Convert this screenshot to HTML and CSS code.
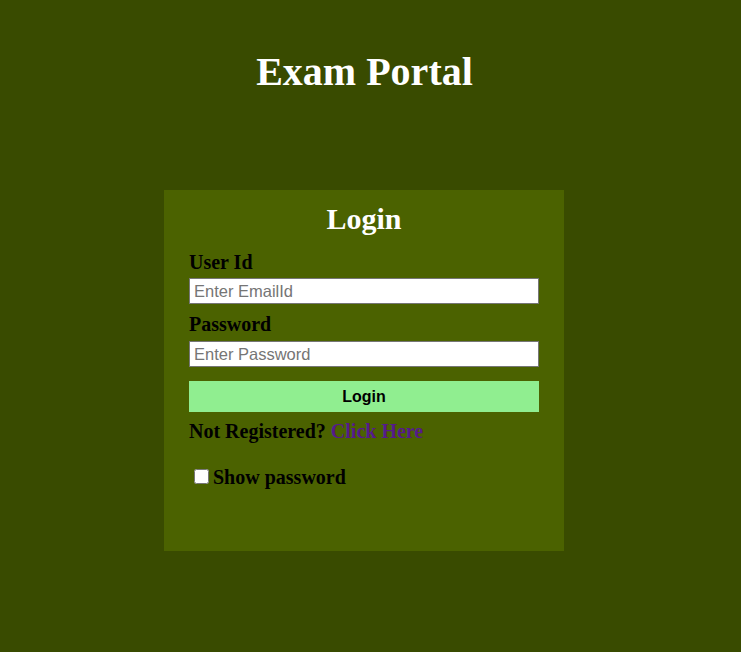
FILE: index.html
```html
<!DOCTYPE html>
<html>
<head>
<meta charset="utf-8">
<title>Exam Portal</title>
<link rel="stylesheet" href="styles.css">
</head>
<body>
<main class="page">
  <h1 class="title">Exam Portal</h1>
  <form class="card">
    <h2 class="card-title">Login</h2>
    <label class="label" for="uid">User Id</label>
    <input class="field" id="uid" type="text" placeholder="Enter EmailId">
    <label class="label" for="pwd">Password</label>
    <input class="field" id="pwd" type="password" placeholder="Enter Password">
    <button class="btn" type="button">Login</button>
    <p class="register">Not Registered? <a class="link" href="#">Click Here</a></p>
    <label class="show"><input class="check" type="checkbox">Show password</label>
  </form>
</main>
</body>
</html>
```
FILE: styles.css
```css
html, body {
  margin: 0;
  padding: 0;
  background: #394b00;
  font-family: "Liberation Serif", "Times New Roman", serif;
}
.page {
  width: 728px;
  display: flex;
  flex-direction: column;
  align-items: center;
}
.title {
  margin: 49px 0 0 1px;
  font-size: 40px;
  line-height: 46px;
  color: #ffffff;
  font-weight: bold;
}
.card {
  margin-top: 95px;
  width: 400px;
  height: 361px;
  box-sizing: border-box;
  background: #4b6200;
  padding: 10px 25px 0;
  display: flex;
  flex-direction: column;
}
.card-title {
  margin: 0 0 12px;
  text-align: center;
  color: #ffffff;
  font-size: 30px;
  line-height: 38px;
}
.label {
  font-weight: bold;
  font-size: 20px;
  line-height: 24px;
  color: #000;
}
.field {
  margin: 4px 0 8px;
  width: 350px;
  height: 26px;
  flex: 0 0 26px;
  box-sizing: border-box;
  border: 1px solid #767676;
  padding: 1px 4px;
  font-family: "Liberation Sans", Arial, sans-serif;
  font-size: 16.5px;
  background: #fff;
}
#pwd {
  margin-top: 5px;
}
.field::placeholder {
  color: #757575;
}
.btn {
  margin-top: 6px;
  width: 350px;
  height: 31px;
  flex: 0 0 31px;
  border: none;
  background: #90ee90;
  font-family: "Liberation Sans", Arial, sans-serif;
  font-weight: bold;
  font-size: 16px;
  color: #000;
}
.register {
  margin: 6px 0 0;
  font-weight: bold;
  font-size: 20px;
  line-height: 26px;
  color: #000;
}
.link {
  color: #551a8b;
  text-decoration: none;
}
.show {
  margin-top: 20px;
  display: flex;
  align-items: center;
  font-weight: bold;
  font-size: 20px;
  line-height: 26px;
  color: #000;
}
.check {
  margin: 0 4px 2px 5px;
  width: 15px;
  height: 15px;
}
```
